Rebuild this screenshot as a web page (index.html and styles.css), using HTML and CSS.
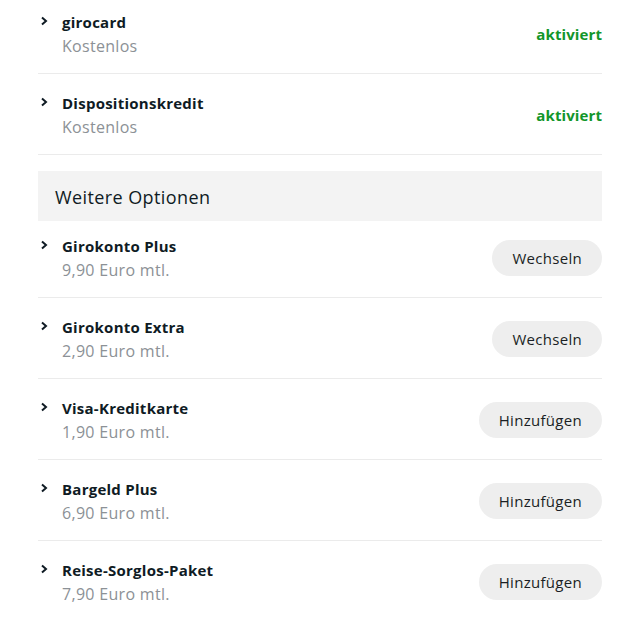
FILE: index.html
```html
<!DOCTYPE html>
<html lang="de">
<head>
<meta charset="UTF-8">
<meta name="viewport" content="width=device-width, initial-scale=1.0">
<title>Kontomodell</title>
<link rel="stylesheet" href="styles.css">
</head>
<body>
<div class="options">
    <div class="list">
        <div class="item">
            <svg class="chevron" viewBox="0 0 8 10" width="8" height="10"><polyline points="2,1.5 6,5 2,8.5"/></svg>
            <div class="info">
                <div class="name">girocard</div>
                <div class="price">Kostenlos</div>
            </div>
            <span class="status">aktiviert</span>
        </div>
        <div class="item">
            <svg class="chevron" viewBox="0 0 8 10" width="8" height="10"><polyline points="2,1.5 6,5 2,8.5"/></svg>
            <div class="info">
                <div class="name">Dispositionskredit</div>
                <div class="price">Kostenlos</div>
            </div>
            <span class="status">aktiviert</span>
        </div>
    </div>

    <div class="section-title">Weitere Optionen</div>

    <div class="list more">
        <div class="item">
            <svg class="chevron" viewBox="0 0 8 10" width="8" height="10"><polyline points="2,1.5 6,5 2,8.5"/></svg>
            <div class="info">
                <div class="name">Girokonto Plus</div>
                <div class="price">9,90 Euro mtl.</div>
            </div>
            <button class="action">Wechseln</button>
        </div>
        <div class="item">
            <svg class="chevron" viewBox="0 0 8 10" width="8" height="10"><polyline points="2,1.5 6,5 2,8.5"/></svg>
            <div class="info">
                <div class="name">Girokonto Extra</div>
                <div class="price">2,90 Euro mtl.</div>
            </div>
            <button class="action">Wechseln</button>
        </div>
        <div class="item">
            <svg class="chevron" viewBox="0 0 8 10" width="8" height="10"><polyline points="2,1.5 6,5 2,8.5"/></svg>
            <div class="info">
                <div class="name">Visa-Kreditkarte</div>
                <div class="price">1,90 Euro mtl.</div>
            </div>
            <button class="action">Hinzufügen</button>
        </div>
        <div class="item">
            <svg class="chevron" viewBox="0 0 8 10" width="8" height="10"><polyline points="2,1.5 6,5 2,8.5"/></svg>
            <div class="info">
                <div class="name">Bargeld Plus</div>
                <div class="price">6,90 Euro mtl.</div>
            </div>
            <button class="action">Hinzufügen</button>
        </div>
        <div class="item">
            <svg class="chevron" viewBox="0 0 8 10" width="8" height="10"><polyline points="2,1.5 6,5 2,8.5"/></svg>
            <div class="info">
                <div class="name">Reise-Sorglos-Paket</div>
                <div class="price">7,90 Euro mtl.</div>
            </div>
            <button class="action">Hinzufügen</button>
        </div>
    </div>
</div>
</body>
</html>
```

FILE: styles.css
```css
body {
    margin: 0;
    background-color: #ffffff;
    font-family: 'Open Sans', 'Noto Sans', sans-serif;
    color: #0f1b24;
    overflow: hidden;
}

.options {
    margin: -7px 33px 0 38px;
}

.item {
    display: flex;
    align-items: center;
    padding: 17px 0 15px 0;
    border-bottom: 1px solid #ebebeb;
}

.more .item:first-child {
    padding-top: 13px;
}

.chevron {
    align-self: flex-start;
    margin: 6px 14px 0 2px;
    fill: none;
    stroke: #0f1b24;
    stroke-width: 2;
}

.info {
    flex: 1;
}

.name {
    font-size: 15px;
    font-weight: 700;
    line-height: 24px;
    letter-spacing: 0.25px;
}

.price {
    font-size: 16px;
    line-height: 24px;
    color: #8c9196;
    letter-spacing: 0.3px;
}

.status {
    font-size: 15px;
    font-weight: 700;
    color: #12962a;
    letter-spacing: 0.1px;
}

.section-title {
    margin-top: 16px;
    background-color: #f3f3f3;
    height: 50px;
    line-height: 52px;
    padding-left: 17px;
    font-size: 18px;
    letter-spacing: 0.4px;
}

.action {
    height: 36px;
    padding: 0 20px;
    border: none;
    border-radius: 18px;
    background-color: #eeeeee;
    font-family: inherit;
    font-size: 15px;
    letter-spacing: 0.3px;
    color: #1a1f24;
    cursor: pointer;
}
```
